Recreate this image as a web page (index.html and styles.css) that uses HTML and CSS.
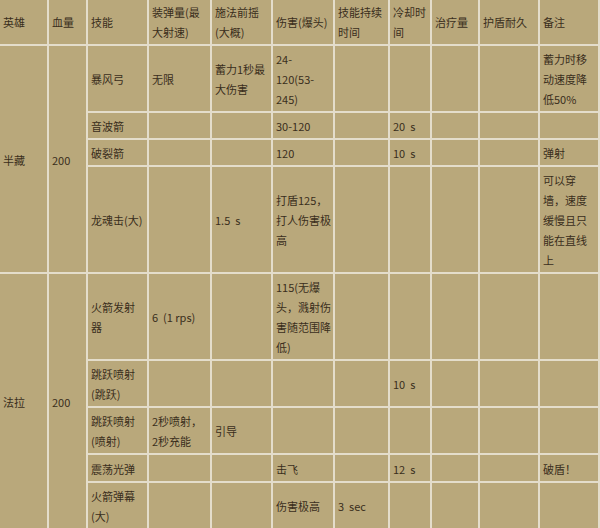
FILE: index.html
```html
<!DOCTYPE html>
<html lang="zh-CN">
<head>
<meta charset="utf-8">
<title>英雄技能数据</title>
<link rel="stylesheet" href="styles.css">
</head>
<body>
<table class="data">
  <colgroup>
    <col class="c1"><col class="c2"><col class="c3"><col class="c4"><col class="c5"><col class="c6"><col class="c7"><col class="c8"><col class="c9"><col class="c10"><col class="c11">
  </colgroup>
  <tbody>
    <tr>
      <td>英雄</td><td>血量</td><td>技能</td><td>装弹量(最大射速)</td><td>施法前摇(大概)</td><td class="dmg">伤害(爆头)</td><td>技能持续时间</td><td>冷却时间</td><td>治疗量</td><td>护盾耐久</td><td>备注</td>
    </tr>
    <tr>
      <td rowspan="4">半藏</td><td rowspan="4">200</td><td>暴风弓</td><td>无限</td><td>蓄力1秒最大伤害</td><td class="dmg">24-<br>120(53-<br>245)</td><td></td><td></td><td></td><td></td><td>蓄力时移动速度降低50%</td>
    </tr>
    <tr>
      <td>音波箭</td><td></td><td></td><td class="dmg">30-120</td><td></td><td>20&nbsp;&nbsp;s</td><td></td><td></td><td></td>
    </tr>
    <tr>
      <td>破裂箭</td><td></td><td></td><td class="dmg">120</td><td></td><td>10&nbsp;&nbsp;s</td><td></td><td></td><td>弹射</td>
    </tr>
    <tr>
      <td>龙魂击(大)</td><td></td><td>1.5&nbsp;&nbsp;s</td><td class="dmg">打盾125，<br>打人伤害极<br>高</td><td></td><td></td><td></td><td></td><td>可以穿<br>墙，速度<br>缓慢且只<br>能在直线<br>上</td>
    </tr>
    <tr>
      <td rowspan="5">法拉</td><td rowspan="5">200</td><td>火箭发射<br>器</td><td>6&nbsp;&nbsp;(1 rps)</td><td></td><td class="dmg">115(无爆<br>头，溅射伤<br>害随范围降<br>低)</td><td></td><td></td><td></td><td></td><td></td>
    </tr>
    <tr>
      <td>跳跃喷射<br>(跳跃)</td><td></td><td></td><td class="dmg"></td><td></td><td>10&nbsp;&nbsp;s</td><td></td><td></td><td></td>
    </tr>
    <tr>
      <td>跳跃喷射<br>(喷射)</td><td>2秒喷射，<br>2秒充能</td><td>引导</td><td class="dmg"></td><td></td><td></td><td></td><td></td><td></td>
    </tr>
    <tr class="short">
      <td>震荡光弹</td><td></td><td></td><td class="dmg">击飞</td><td></td><td>12&nbsp;&nbsp;s</td><td></td><td></td><td>破盾！</td>
    </tr>
    <tr>
      <td>火箭弹幕<br>(大)</td><td></td><td></td><td class="dmg">伤害极高</td><td>3&nbsp;&nbsp;sec</td><td></td><td></td><td></td><td></td>
    </tr>
  </tbody>
</table>
</body>
</html>
```

FILE: styles.css
```css
html, body {
  margin: 0;
  padding: 0;
  background: #b9a87b;
  overflow: hidden;
}

.data {
  table-layout: fixed;
  width: 600px;
  border-collapse: separate;
  border-spacing: 0;
  margin-top: -1px;
  font-family: "Noto Sans CJK SC", "Noto Sans", sans-serif;
  font-size: 11px;
  line-height: 20px;
  color: #3a2e1c;
  background: #b9a87b;
}

.data td {
  padding: 3px 2px 2px 3px;
  border-right: 2px solid #e4ddcb;
  border-bottom: 2px solid #e4ddcb;
  vertical-align: middle;
  text-align: left;
  overflow: hidden;
}

.data td.dmg {
  padding-right: 0;
}

.data tr:first-child td {
  border-top: 1px solid #e4ddcb;
  padding-top: 2px;
}

.c1 { width: 49px; }
.c2 { width: 39px; }
.c3 { width: 61px; }
.c4 { width: 63px; }
.c5 { width: 61px; }
.c6 { width: 62px; }
.c7 { width: 55px; }
.c8 { width: 42px; }
.c9 { width: 48px; }
.c10 { width: 60px; }
.c11 { width: 60px; }

.data tr.short td {
  height: 21px;
}
```
